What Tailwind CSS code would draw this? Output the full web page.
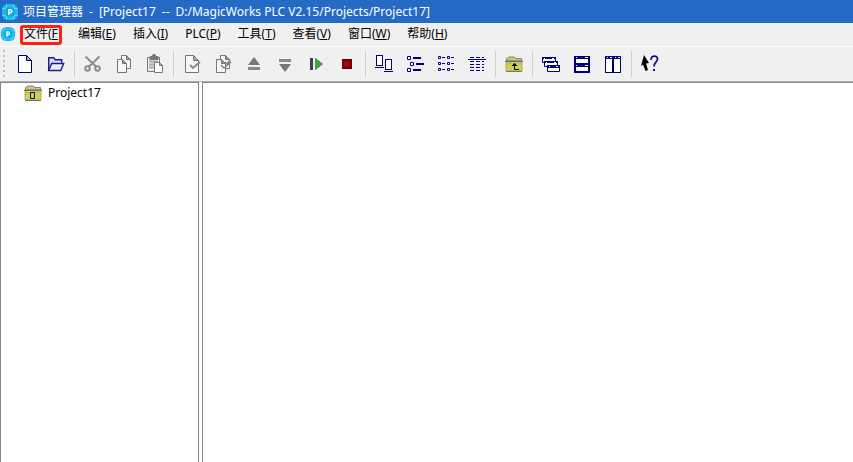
<!DOCTYPE html>
<html lang="zh-CN">
<head>
    <meta charset="UTF-8">
    <meta name="viewport" content="width=device-width, initial-scale=1.0">
    <title>项目管理器</title>
    <script src="https://cdn.jsdelivr.net/npm/@tailwindcss/browser@4"></script>
</head>
<body class="bg-white min-h-screen flex flex-col text-xs text-black font-['Noto_Sans','Noto_Sans_CJK_SC',sans-serif]">
    <!-- Shared symbols -->
    <svg class="hidden">
        <symbol id="logo" viewBox="0 0 18 18">
            <rect x="1" y="1" width="16" height="16" rx="6" fill="#18bdf2"/>
            <path d="M1 5.5h16M1 12.5h16M5.5 1v16M12.5 1v16" stroke="#7fd9f5" stroke-width=".8"/>
            <rect x="4.5" y="4.5" width="9" height="9" rx="2" fill="#0fa9e8"/>
            <path d="M7.8 12V6.7h1.5a1.5 1.5 0 0 1 0 3H7.8" fill="none" stroke="#fff" stroke-width="1.5"/>
        </symbol>
        <symbol id="folder" viewBox="0 0 18 16">
            <path d="M1.5 5V2.5h1l1-1.5h6l1 1.5h6V5z" fill="#cccc66" stroke="#85856b"/>
            <path d="M0 5.5h18" stroke="#6f6f68" stroke-width="1.5"/>
            <path d="M1 7h16v8H1z" fill="#cfcf54" stroke="#b0b050"/>
            <path d="M1 15.5h16" stroke="#77776a"/>
        </symbol>
    </svg>

    <header class="h-[23px] bg-[#256bc5] text-white flex items-center gap-1 px-px">
        <svg class="w-[18px] h-[18px]"><use href="#logo"/></svg>
        <h1 class="flex gap-1.5 whitespace-nowrap">
            <span>项目管理器</span>
            <span>-</span>
            <span>[Project17</span>
            <span>--</span>
            <span>D:/MagicWorks PLC V2.15/Projects/Project17]</span>
        </h1>
    </header>

    <nav class="h-[23px] bg-[#f0f0f0] flex items-center pb-0.5">
        <svg class="w-4 h-4 mr-2"><use href="#logo"/></svg>
        <div class="flex gap-[17px] whitespace-nowrap">
            <button class="relative w-[37px] text-left">文件(<u>F</u><span class="absolute -left-1 -top-px w-[42px] h-5 border-[3px] border-[#ff2010] rounded-[3px]"></span></button>
            <button>编辑(<u>E</u>)</button>
            <button>插入(<u>I</u>)</button>
            <button>PLC(<u>P</u>)</button>
            <button>工具(<u>T</u>)</button>
            <button>查看(<u>V</u>)</button>
            <button>窗口(<u>W</u>)</button>
            <button>帮助(<u>H</u>)</button>
        </div>
    </nav>

    <div class="h-9 bg-[#f0f0f0] border-t border-white border-b border-b-[#b0b0b4] flex items-start pt-px" role="toolbar">
        <span class="w-[9px] h-[31px] flex justify-center items-center">
            <svg class="w-[3px] h-[27px]" fill="#c0c0c0"><path d="M0 0h2v2H0zM0 5h2v2H0zM0 10h2v2H0zM0 15h2v2H0zM0 20h2v2H0zM0 25h2v2H0z"/></svg>
        </span>
        <button class="w-[31px] h-[31px] flex justify-center items-center" aria-label="新建">
            <svg class="w-[25px] h-[25px]" fill="#fff" stroke="#00007c">
                <path d="M6.5 4.5h8l5 5v12h-13z"/>
                <path d="M14.5 4.5v5h5z" fill="#a9a9d8"/>
            </svg>
        </button>
        <button class="w-[31px] h-[31px] flex justify-center items-center" aria-label="打开">
            <svg class="w-[25px] h-[25px]" fill="#d9d9f0" stroke="#1c1c90" stroke-width="1.4">
                <path d="M5.7 19.5V6.7h5l1.5 2h6.500v3"/>
                <path d="M5.7 19.5l3-7h12l-3 7z" fill="#eeeefa"/>
            </svg>
        </button>
        <span class="w-[6px] h-[31px] flex justify-center items-center"><i class="w-px h-[26px] bg-[#cfcfcf]"></i></span>
        <button class="w-[31px] h-[31px] flex justify-center items-center" aria-label="剪切">
            <svg class="w-[25px] h-[25px]" fill="none" stroke="#8c8c8c" stroke-width="2">
                <path d="M5.5 5.5l10.5 10M19.5 5.5L9 15.5"/>
                <circle cx="7.5" cy="17.5" r="2.3"/>
                <circle cx="17.5" cy="17.5" r="2.3"/>
            </svg>
        </button>
        <button class="w-[31px] h-[31px] flex justify-center items-center" aria-label="复制">
            <svg class="w-[25px] h-[25px]" fill="#f7f7f7" stroke="#777">
                <path d="M10.5 4.5h5l4 4v9h-9z"/>
                <path d="M15.5 4.5v4h4z" fill="#999"/>
                <path d="M6.5 8.5h5l4 4v9h-9z"/>
                <path d="M11.5 8.5v4h4z" fill="#999"/>
            </svg>
        </button>
        <button class="w-[31px] h-[31px] flex justify-center items-center" aria-label="粘贴">
            <svg class="w-[25px] h-[25px]" fill="#efefef" stroke="#777">
                <path d="M5.5 6.5h12v14h-12z"/>
                <path d="M7 10.5h9M7 13.5h6M7 16.5h5" stroke="#aaa" stroke-width="2"/>
                <path d="M8 5.5h2l1-2h2l1 2h2v3H8z" fill="#777"/>
                <path d="M12.5 11.5h5l3 3v7h-8z" fill="#fff"/>
                <path d="M17.5 11.5v3h3z" fill="#aaa"/>
            </svg>
        </button>
        <span class="w-[6px] h-[31px] flex justify-center items-center"><i class="w-px h-[26px] bg-[#cfcfcf]"></i></span>
        <button class="w-[31px] h-[31px] flex justify-center items-center" aria-label="编译">
            <svg class="w-[25px] h-[25px]" fill="#f7f7f7" stroke="#777">
                <path d="M6.5 4.5h8l5 5v12h-13z"/>
                <path d="M14.5 4.5v5h5z" fill="#aaa"/>
                <path d="M11 14l3 3 7-6" fill="none" stroke="#888" stroke-width="2"/>
            </svg>
        </button>
        <button class="w-[31px] h-[31px] flex justify-center items-center" aria-label="全部编译">
            <svg class="w-[25px] h-[25px]" fill="#f7f7f7" stroke="#777">
                <path d="M10.5 4.5h5l4 4v9h-9z"/>
                <path d="M15.5 4.5v4h4z" fill="#999"/>
                <path d="M6.5 8.5h5l4 4v9h-9z"/>
                <path d="M11.5 8.5v4h4z" fill="#999"/>
                <path d="M11 14l3 3 7-6M15 11l2 2 3-4" fill="none" stroke="#888" stroke-width="1.5"/>
            </svg>
        </button>
        <button class="w-[31px] h-[31px] flex justify-center items-center" aria-label="上传">
            <svg class="w-[25px] h-[25px]">
                <path d="M13 6l6 8H7z" fill="#777"/>
                <path d="M7 16h12v3H7z" fill="#888"/>
            </svg>
        </button>
        <button class="w-[31px] h-[31px] flex justify-center items-center" aria-label="下载">
            <svg class="w-[25px] h-[25px]">
                <path d="M7 8h12v3H7z" fill="#888"/>
                <path d="M7 13h12l-6 8z" fill="#777"/>
            </svg>
        </button>
        <button class="w-[31px] h-[31px] flex justify-center items-center" aria-label="运行">
            <svg class="w-[25px] h-[25px]">
                <path d="M7 7h3v12H7z" fill="#404040"/>
                <path d="M12.5 7.5l7 5.5-7 5.5z" fill="#3cb01c" stroke="#4f8a78"/>
            </svg>
        </button>
        <button class="w-[31px] h-[31px] flex justify-center items-center" aria-label="停止">
            <svg class="w-[25px] h-[25px]">
                <path d="M8 8h10v10H8z" fill="#700000"/>
                <path d="M10 10h6v6h-6z" fill="#b00000"/>
            </svg>
        </button>
        <span class="w-[6px] h-[31px] flex justify-center items-center"><i class="w-px h-[26px] bg-[#cfcfcf]"></i></span>
        <button class="w-[31px] h-[31px] flex justify-center items-center" aria-label="大图标">
            <svg class="w-[25px] h-[25px]" fill="#fff" stroke="#00007c">
                <rect x="5.5" y="4.5" width="6" height="10"/>
                <rect x="14.5" y="8.5" width="6" height="10"/>
                <path d="M4 16.5h9M13 20.5h9"/>
            </svg>
        </button>
        <button class="w-[31px] h-[31px] flex justify-center items-center" aria-label="小图标">
            <svg class="w-[25px] h-[25px]" fill="#fff" stroke="#00007c">
                <path d="M5.5 5.5h3v3h-3zM8.5 11.5h3v3h-3zM5.5 17.5h3v3h-3z"/>
                <path d="M11 7h8M14 13h8M11 19h8" stroke-width="2"/>
            </svg>
        </button>
        <button class="w-[31px] h-[31px] flex justify-center items-center" aria-label="列表">
            <svg class="w-[25px] h-[25px]" fill="#fff" stroke="#00007c">
                <path d="M5.5 5.5h2v2h-2zM14.5 5.5h2v2h-2zM5.5 11.5h2v2h-2zM14.5 11.5h2v2h-2zM5.5 17.5h2v2h-2zM14.5 17.5h2v2h-2z"/>
                <path d="M9 6.5h3M18 6.5h3M9 12.5h3M18 12.5h3M9 18.5h3M18 18.5h3"/>
            </svg>
        </button>
        <button class="w-[31px] h-[31px] flex justify-center items-center" aria-label="详细信息">
            <svg class="w-[25px] h-[25px]" stroke="#00007c">
                <path d="M4 8.5h18"/>
                <path d="M6 6.5h14M6 10.5h14M6 13.5h14M6 16.5h14M6 19.5h14" stroke-dasharray="4 2"/>
            </svg>
        </button>
        <span class="w-[6px] h-[31px] flex justify-center items-center"><i class="w-px h-[26px] bg-[#cfcfcf]"></i></span>
        <button class="w-[31px] h-[31px] flex justify-center items-center" aria-label="上一级">
            <svg class="w-[25px] h-[25px]">
                <use href="#folder" x="4" y="5" width="18" height="16"/>
                <path d="M13.5 14v4.5H18" fill="none" stroke="#000"/>
                <path d="M10.5 15l3-3 3 3z" fill="#000"/>
            </svg>
        </button>
        <span class="w-[6px] h-[31px] flex justify-center items-center"><i class="w-px h-[26px] bg-[#cfcfcf]"></i></span>
        <button class="w-[31px] h-[31px] flex justify-center items-center" aria-label="层叠">
            <svg class="w-[25px] h-[25px]" fill="#fff" stroke="#00007c">
                <path d="M4.5 6.5h13v5h-13z"/>
                <path d="M4 7h14" stroke-width="2"/>
                <path d="M6.5 10.5h13v5h-13z"/>
                <path d="M6 11h14" stroke-width="2"/>
                <path d="M9.5 14.5h12v6h-12z"/>
                <path d="M9 15.5h13" stroke-width="3"/>
                <path d="M6 7.5h1M8 11.5h1M11 15.5h1M14 7.5h2M16 11.5h2M18 15.5h2" stroke="#fff"/>
            </svg>
        </button>
        <button class="w-[31px] h-[31px] flex justify-center items-center" aria-label="水平平铺">
            <svg class="w-[25px] h-[25px]">
                <path d="M5 5h16v17H5z" fill="#00007c"/>
                <path d="M7 8h12v4H7zM7 16h12v4H7zM7 6h1v1H7zM16 6h3v1h-3zM7 14h1v1H7zM16 14h3v1h-3z" fill="#fff"/>
            </svg>
        </button>
        <button class="w-[31px] h-[31px] flex justify-center items-center" aria-label="垂直平铺">
            <svg class="w-[25px] h-[25px]">
                <path d="M5 5h16v17H5z" fill="#00007c"/>
                <path d="M6 8h6v13H6zM14 8h6v13h-6zM7 6h1v1H7zM10 6h2v1h-2zM15 6h1v1h-1zM18 6h2v1h-2z" fill="#fff"/>
            </svg>
        </button>
        <span class="w-[6px] h-[31px] flex justify-center items-center"><i class="w-px h-[26px] bg-[#cfcfcf]"></i></span>
        <button class="w-[31px] h-[31px] flex justify-center items-center" aria-label="帮助">
            <svg class="w-[25px] h-[25px]">
                <path d="M7 4l5 8-3 .5 2 6.5-2.5 1L6 13.500 4 15z" fill="#000"/>
                <path d="M14 9c0-5 6.5-5 6.5-1 0 3-3.5 3.5-3.5 7.5" fill="none" stroke="#10108a" stroke-width="1.7"/>
                <path d="M16 18h2v2h-2z" fill="#10108a"/>
            </svg>
        </button>
    </div>

    <main class="grow flex gap-[3px]">
        <aside class="w-[199px] border-t border-x border-[#828790]">
            <ul>
                <li class="flex items-center gap-[6px] pl-[23px] h-5">
                    <svg class="w-[18px] h-4">
                        <use href="#folder"/>
                        <path d="M6.5 7.5h4v6h-4z" fill="none" stroke="#111"/>
                    </svg>
                    Project17
                </li>
            </ul>
        </aside>
        <section class="grow border-t border-l border-[#828790]"></section>
    </main>
</body>
</html>
